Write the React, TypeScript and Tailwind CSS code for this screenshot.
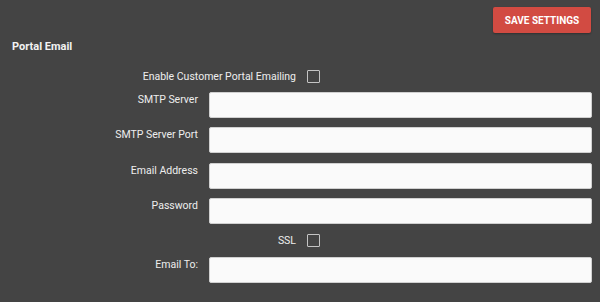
import React from 'react';

const fields = [
  { label: 'SMTP Server', mt: 'mt-[9px]' },
  { label: 'SMTP Server Port', mt: 'mt-[9px]' },
  { label: 'Email Address', mt: 'mt-[10px]' },
  { label: 'Password', mt: 'mt-[9px]' }];


function Field({ label, className }: {label: string;className: string;}) {
  return (
    <div className={`flex ${className}`}>
      <label className="w-[186px] shrink-0 pt-px text-right text-[10.5px] leading-[13px] text-[#eeeeee]">
        {label}
      </label>
      <input
        type="text"
        className="ml-[11px] h-[26px] flex-1 rounded-[2px] border border-[#d0d0d0] bg-[#fafafa] px-2 text-[12px] text-[#333] outline-none" />
      
    </div>);

}

function CheckRow({ label, className }: {label: string;className: string;}) {
  return (
    <div className={`flex h-[13px] items-center ${className}`}>
      <span className="w-[284px] shrink-0 text-right text-[10.5px] leading-[13px] text-[#eeeeee]">
        {label}
      </span>
      <span className="ml-[11px] h-[13px] w-[13px] rounded-[1px] border border-[#c4c4c4]" />
    </div>);

}

export default function App() {
  return (
    <div
      className="flex h-[302px] w-[600px] flex-col bg-[#444444] pl-3 pr-2 pt-[7px]"
      style={{ fontFamily: 'Roboto, "Liberation Sans", sans-serif' }}>
      
      <div className="flex justify-end">
        <button className="mr-px h-[26px] w-[98px] rounded-[2px] bg-[#d24b42] text-[10px] font-bold text-white shadow-[0_1px_2px_rgba(0,0,0,0.3)]">
          SAVE SETTINGS
        </button>
      </div>
      <h2 className="mt-[6px] text-[11px] font-bold leading-4 text-[#f2f2f2]">
        Portal Email
      </h2>
      <CheckRow label="Enable Customer Portal Emailing" className="mt-[15px]" />
      {fields.map((f) =>
      <Field key={f.label} label={f.label} className={f.mt} />
      )}
      <CheckRow label="SSL" className="mt-[10px]" />
      <Field label="Email To:" className="mt-[10px]" />
    </div>);

}
